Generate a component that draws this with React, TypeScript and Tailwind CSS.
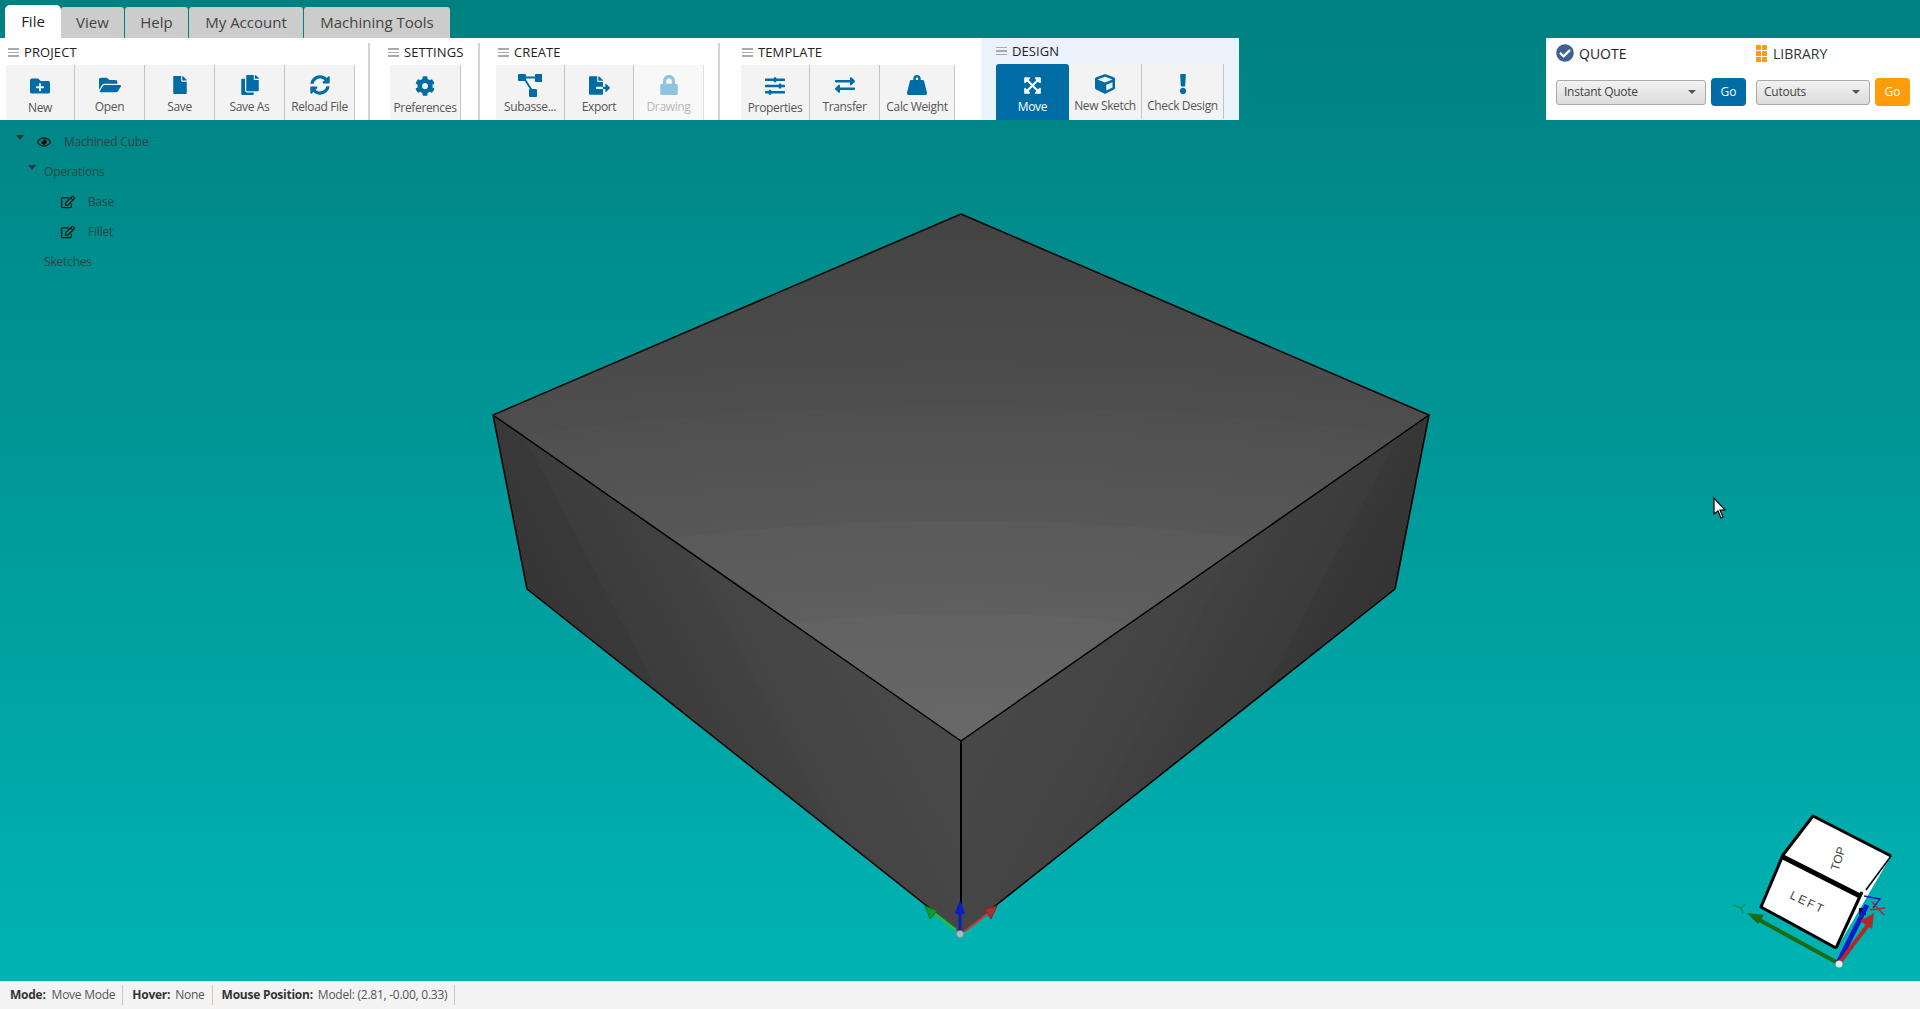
import React from "react";
import {
  FaFolderPlus, FaFolderOpen, FaFile, FaCopy, FaSyncAlt, FaCog, FaFileExport, FaLock, FaSlidersH,
  FaExchangeAlt, FaWeightHanging, FaExpandArrowsAlt, FaCube, FaExclamation, FaRegEye, FaRegEdit, FaCheckCircle,
} from "react-icons/fa";

const font = { fontFamily: '"Open Sans", "Noto Sans", sans-serif' };

function SubIcon() {
  return (
    <svg width="24" height="24" viewBox="0 0 24 24" fill="currentColor">
      <rect x="0" y="1" width="8" height="7" rx="1" />
      <rect x="17" y="1" width="8" height="8" rx="1" />
      <rect x="11" y="16" width="8" height="8" rx="1" />
      <path d="M7 3.5h11v2H7zM7 5l7 11-1.6 1L5.5 6z" />
    </svg>
  );
}

function Burger() {
  return (
    <div className="flex flex-col gap-[2px] w-[11px] mr-[5px]">
      <div className="h-[1.5px] bg-[#aaa]" />
      <div className="h-[1.5px] bg-[#aaa]" />
      <div className="h-[1.5px] bg-[#aaa]" />
    </div>
  );
}

type Btn = { label: string; icon: React.ReactNode; w: string; low?: boolean; active?: boolean; off?: boolean };

function ToolBtn({ b }: { b: Btn }) {
  return (
    <div
      className={`${b.w} flex flex-col items-center shrink-0 ${
        b.active ? "h-[56px] bg-[#006ca6] text-white rounded-t-[3px]" : b.off ? "h-[55px] bg-[#f8f8f8] border-r border-[#ddd]" : "h-[55px] bg-[#f3f3f3] border-r border-[#c4c4c4]"
      } ${b.low ? "pt-[9px]" : "pt-[8px]"}`}
    >
      <div className={`h-[24px] flex items-center justify-center ${b.active ? "text-white" : b.off ? "text-[#8fc3e0]" : "text-[#006ca6]"}`}>{b.icon}</div>
      <div className={`mt-[2px] text-[12px] tracking-[-0.35px] leading-[16px] whitespace-nowrap ${b.active ? "text-white" : b.off ? "text-[#b8b8b8]" : "text-[#555]"}`}>{b.label}</div>
    </div>
  );
}

function Group({ title, buttons, pl, w, bg, hdr }: { title: string; buttons: Btn[]; pl: string; w: string; bg?: string; hdr: string }) {
  return (
    <div className={`${w} ${pl} ${bg ?? ""} h-[82px] flex flex-col shrink-0`}>
      <div className={`${hdr} flex items-center`}>
        <Burger />
        <span className="text-[13px] tracking-[0.1px] text-[#222] leading-none">{title}</span>
      </div>
      <div className="flex">
        {buttons.map((b) => (
          <ToolBtn key={b.label} b={b} />
        ))}
      </div>
    </div>
  );
}

const Divider = () => <div className="w-[2px] bg-[#d4d4d4] mt-[5px] h-[77px] shrink-0" />;

const tabs = [
  { label: "View", w: "w-[63px]" },
  { label: "Help", w: "w-[63px]" },
  { label: "My Account", w: "w-[114px]" },
  { label: "Machining Tools", w: "w-[146px]" },
];

function Caret({ className }: { className: string }) {
  return (
    <svg width="8" height="5" viewBox="0 0 8 5" className={className}>
      <polygon points="0,0 8,0 4,5" fill="#333" />
    </svg>
  );
}

function SelectBox({ label, w }: { label: string; w: string }) {
  return (
    <div className={`${w} h-[25px] rounded-[3px] border border-[#aaa] bg-gradient-to-b from-[#f2f2f2] to-[#dcdcdc] flex items-center justify-between pl-[7px] pr-[9px] text-[#444] text-[12px] tracking-[-0.25px]`}>
      <span>{label}</span>
      <svg width="8" height="4" viewBox="0 0 8 4">
        <polygon points="0,0 8,0 4,4" fill="#555" />
      </svg>
    </div>
  );
}

function Scene() {
  return (
    <svg className="absolute inset-0 w-full h-full" viewBox="0 0 1920 1009">
      <defs>
        <radialGradient id="topFace" gradientUnits="userSpaceOnUse" cx="0" cy="0" r="600" gradientTransform="translate(961 800) scale(3 1)">
          <stop offset="0.1" stopColor="#686868" />
          <stop offset="0.31" stopColor="#626262" />
          <stop offset="0.31" stopColor="#5f5f5f" />
          <stop offset="0.4" stopColor="#5c5c5c" />
          <stop offset="0.465" stopColor="#5a5a5a" />
          <stop offset="0.465" stopColor="#575757" />
          <stop offset="0.655" stopColor="#505050" />
          <stop offset="0.655" stopColor="#4e4e4e" />
          <stop offset="0.8" stopColor="#494949" />
          <stop offset="1" stopColor="#424242" />
        </radialGradient>
        <linearGradient id="leftFace" gradientUnits="userSpaceOnUse" x1="530" y1="570" x2="930" y2="360">
          <stop offset="0" stopColor="#363636" />
          <stop offset="0.126" stopColor="#393939" />
          <stop offset="0.126" stopColor="#3c3c3c" />
          <stop offset="0.33" stopColor="#424242" />
          <stop offset="0.33" stopColor="#444444" />
          <stop offset="0.7" stopColor="#4a4a4a" />
          <stop offset="1" stopColor="#4c4c4c" />
        </linearGradient>
        <linearGradient id="rightFace" gradientUnits="userSpaceOnUse" x1="1392" y1="570" x2="992" y2="360">
          <stop offset="0" stopColor="#343434" />
          <stop offset="0.126" stopColor="#383838" />
          <stop offset="0.126" stopColor="#3b3b3b" />
          <stop offset="0.33" stopColor="#414141" />
          <stop offset="0.33" stopColor="#434343" />
          <stop offset="0.7" stopColor="#484848" />
          <stop offset="1" stopColor="#4b4b4b" />
        </linearGradient>
      </defs>
      <polygon points="961,214 1429,415 961,741 493,415" fill="url(#topFace)" />
      <polygon points="493,415 961,741 961,934 527,589" fill="url(#leftFace)" />
      <polygon points="1429,415 961,741 961,934 1395,589" fill="url(#rightFace)" />
      <g stroke="#000" strokeWidth="1.5" fill="none" strokeLinejoin="round">
        <polygon points="961,214 1429,415 961,741 493,415" />
        <polyline points="493,415 527,589 932,910" />
        <polyline points="1429,415 1395,589 990,910" />
        <line x1="961" y1="741" x2="961" y2="905" strokeWidth="2" />
      </g>
      {/* origin triad */}
      <line x1="956" y1="930" x2="930" y2="910" stroke="#22c43a" strokeWidth="2.5" />
      <polygon points="925,906 937,911 930,919" fill="#0f9a2c" stroke="#0b7a22" />
      <line x1="965" y1="931" x2="990" y2="912" stroke="#d8332f" strokeWidth="2" />
      <polygon points="997,906 985,909 991,919" fill="#a93030" stroke="#8a2626" />
      <line x1="960" y1="934" x2="960" y2="905" stroke="#0a1fc0" strokeWidth="3" />
      <polygon points="960,900 965,913 960,916 955,913" fill="#0a1fc0" />
      <circle cx="960" cy="934" r="3.5" fill="#b8b8b8" stroke="#888" strokeWidth="0.5" />
      {/* orientation cube */}
      <polygon points="1813,816 1891,856 1860,895 1783,855" fill="#fff" />
      <polygon points="1783,855 1860,895 1836,948 1761,907" fill="#fff" />
      <polygon points="1860,895 1891,856 1838,946" fill="#fff" />
      <g stroke="#000" fill="none" strokeLinejoin="round">
        <polyline points="1783,855 1813,816 1891,856" strokeWidth="3" />
        <line x1="1781" y1="856" x2="1860" y2="896" strokeWidth="5" />
        <polyline points="1783,855 1761,907 1836,948" strokeWidth="3" />
        <line x1="1862" y1="892" x2="1836" y2="948" strokeWidth="3" />
        <line x1="1891" y1="856" x2="1866" y2="890" strokeWidth="1.5" />
      </g>
      <text x="0" y="0" transform="translate(1842 860) rotate(-72)" fontSize="12" fill="#444" fontFamily="Liberation Sans, sans-serif" textAnchor="middle">TOP</text>
      <text x="0" y="0" transform="translate(1806 906) rotate(25)" fontSize="12" letterSpacing="2" fill="#444" fontFamily="Liberation Sans, sans-serif" textAnchor="middle">LEFT</text>
      <rect x="1859" y="908" width="7" height="7" fill="#111" />
      <line x1="1838" y1="963" x2="1752" y2="916" stroke="#1a6b12" strokeWidth="4" />
      <polygon points="1747,913 1764,915 1758,924" fill="#1a6b12" />
      <line x1="1733" y1="905" x2="1741" y2="908" stroke="#1e7d1e" />
      <line x1="1741" y1="908" x2="1746" y2="904" stroke="#1e7d1e" />
      <line x1="1741" y1="908" x2="1743" y2="914" stroke="#1e7d1e" />
      <line x1="1838" y1="963" x2="1867" y2="905" stroke="#0a1cc8" strokeWidth="5" />
      <line x1="1840" y1="962" x2="1868" y2="925" stroke="#b02a2a" strokeWidth="4" />
      <polygon points="1874,913 1872,929 1860,921" fill="#b02a2a" />
      <polyline points="1864,896 1880,899 1873,908" fill="none" stroke="#0a1cc8" strokeWidth="1.5" />
      <line x1="1872" y1="902" x2="1884" y2="915" stroke="#b02a2a" strokeWidth="1.5" />
      <line x1="1870" y1="910" x2="1885" y2="908" stroke="#b02a2a" strokeWidth="1.5" />
      <circle cx="1839" cy="964" r="3.5" fill="#e8e8e8" />
      {/* cursor */}
      <polygon points="1714,498 1714,514 1718,511 1721,518 1723,517 1720,510 1725,510" fill="#fff" stroke="#000" strokeWidth="1.2" />
    </svg>
  );
}

function Sep() {
  return <div className="w-[1px] h-[20px] bg-[#c8c8c8] ml-[7px] mr-[9px]" />;
}

export default function App() {
  const ic = 18;
  return (
    <div className="relative w-full h-[1009px] overflow-hidden flex flex-col bg-gradient-to-b from-[#008080] to-[#00b5b5]" style={font}>
      <Scene />

      <div className="relative flex items-end h-[38px] pl-[5px] pt-[5px]">
        <div className="w-[56px] h-[33px] bg-white rounded-t-[5px] flex items-center justify-center text-[15px] text-[#222]">File</div>
        <div className="flex">
          {tabs.map((t) => (
            <div key={t.label} className={`${t.w} h-[31px] mr-[1px] bg-[#cccccc] rounded-t-[3px] flex items-center justify-center text-[15px] text-[#444] whitespace-nowrap`}>
              {t.label}
            </div>
          ))}
        </div>
      </div>

      <div className="relative flex justify-between">
        <div className="flex w-[1239px] h-[82px] bg-white">
          <Group
            title="PROJECT"
            w="w-[368px]"
            pl="pl-[6px]"
            hdr="h-[27px] pt-[2px] pl-[2px]"
            buttons={[
              { label: "New", icon: <FaFolderPlus size={20} />, w: "w-[69px]", low: true },
              { label: "Open", icon: <FaFolderOpen size={22} />, w: "w-[70px]" },
              { label: "Save", icon: <FaFile size={ic} />, w: "w-[70px]" },
              { label: "Save As", icon: <FaCopy size={20} />, w: "w-[70px]" },
              { label: "Reload File", icon: <FaSyncAlt size={20} />, w: "w-[70px]" },
            ]}
          />
          <Divider />
          <Group title="SETTINGS" w="w-[108px]" pl="pl-[20px]" hdr="h-[27px] pt-[2px] -ml-[2px]" buttons={[{ label: "Preferences", icon: <FaCog size={20} />, w: "w-[71px]", low: true }]} />
          <Divider />
          <Group
            title="CREATE"
            w="w-[238px]"
            pl="pl-[16px]"
            hdr="h-[27px] pt-[2px] pl-[2px]"
            buttons={[
              { label: "Subasse...", icon: <SubIcon />, w: "w-[69px]" },
              { label: "Export", icon: <FaFileExport size={21} />, w: "w-[69px]" },
              { label: "Drawing", icon: <FaLock size={20} />, w: "w-[70px]", off: true },
            ]}
          />
          <Divider />
          <Group
            title="TEMPLATE"
            w="w-[261px]"
            pl="pl-[21px]"
            hdr="h-[27px] pt-[2px] pl-[1px]"
            buttons={[
              { label: "Properties", icon: <FaSlidersH size={20} />, w: "w-[69px]", low: true },
              { label: "Transfer", icon: <FaExchangeAlt size={20} />, w: "w-[70px]" },
              { label: "Calc Weight", icon: <FaWeightHanging size={20} />, w: "w-[75px]" },
            ]}
          />
          <Group
            title="DESIGN"
            w="w-[258px]"
            pl="pl-[15px]"
            bg="bg-[#eaf3fc]"
            hdr="h-[26px]"
            buttons={[
              { label: "Move", icon: <FaExpandArrowsAlt size={19} />, w: "w-[73px]", active: true, low: true },
              { label: "New Sketch", icon: <FaCube size={20} />, w: "w-[73px]" },
              { label: "Check Design", icon: <FaExclamation size={20} />, w: "w-[82px]" },
            ]}
          />
        </div>

        <div className="w-[374px] h-[82px] bg-white pl-[10px] pt-[6px] shrink-0">
          <div className="flex items-center h-[18px]">
            <div className="w-[200px] flex items-center">
              <FaCheckCircle size={18} className="text-[#3f6292]" />
              <span className="ml-[5px] text-[14px] text-[#222]">QUOTE</span>
            </div>
            <div className="grid grid-cols-2 gap-[1px] w-[11px]">
              {[0, 1, 2, 3, 4, 5].map((i) => (
                <div key={i} className="h-[5px] bg-[#ff9c0a]" />
              ))}
            </div>
            <span className="ml-[6px] text-[14px] text-[#333]">LIBRARY</span>
          </div>
          <div className="flex items-center mt-[16px]">
            <SelectBox label="Instant Quote" w="w-[150px]" />
            <div className="ml-[5px] w-[35px] h-[28px] rounded-[4px] bg-[#006ca6] text-white text-[12px] flex items-center justify-center">Go</div>
            <div className="ml-[10px]">
              <SelectBox label="Cutouts" w="w-[114px]" />
            </div>
            <div className="ml-[5px] w-[35px] h-[28px] rounded-[4px] bg-[#ff9c0a] text-white text-[12px] flex items-center justify-center">Go</div>
          </div>
        </div>
      </div>

      <div className="relative pt-[7px] text-[12px] tracking-[-0.2px] text-[#2d4448]">
        <div className="h-[30px] flex items-center pl-[16px]">
          <Caret className="mb-[10px]" />
          <FaRegEye size={14} className="ml-[13px] mr-[13px] text-[#111]" />
          <span>Machined Cube</span>
        </div>
        <div className="h-[30px] flex items-center pl-[28px]">
          <Caret className="mb-[10px]" />
          <span className="ml-[8px]">Operations</span>
        </div>
        <div className="h-[30px] flex items-center pl-[61px]">
          <FaRegEdit size={14} className="mr-[13px] text-[#111]" />
          <span>Base</span>
        </div>
        <div className="h-[30px] flex items-center pl-[61px]">
          <FaRegEdit size={14} className="mr-[13px] text-[#111]" />
          <span>Fillet</span>
        </div>
        <div className="h-[30px] flex items-center pl-[44px]">
          <span>Sketches</span>
        </div>
      </div>

      <div className="relative mt-auto h-[28px] bg-[#f3f3f3] flex items-center pl-[10px] text-[12px] tracking-[-0.25px] text-[#555]">
        <b className="text-[#333] mr-[6px]">Mode:</b>
        <span>Move Mode</span>
        <Sep />
        <b className="text-[#333] mr-[5px]">Hover:</b>
        <span>None</span>
        <Sep />
        <b className="text-[#333] mr-[5px]">Mouse Position:</b>
        <span>Model: (2.81, -0.00, 0.33)</span>
        <Sep />
      </div>
    </div>
  );
}
